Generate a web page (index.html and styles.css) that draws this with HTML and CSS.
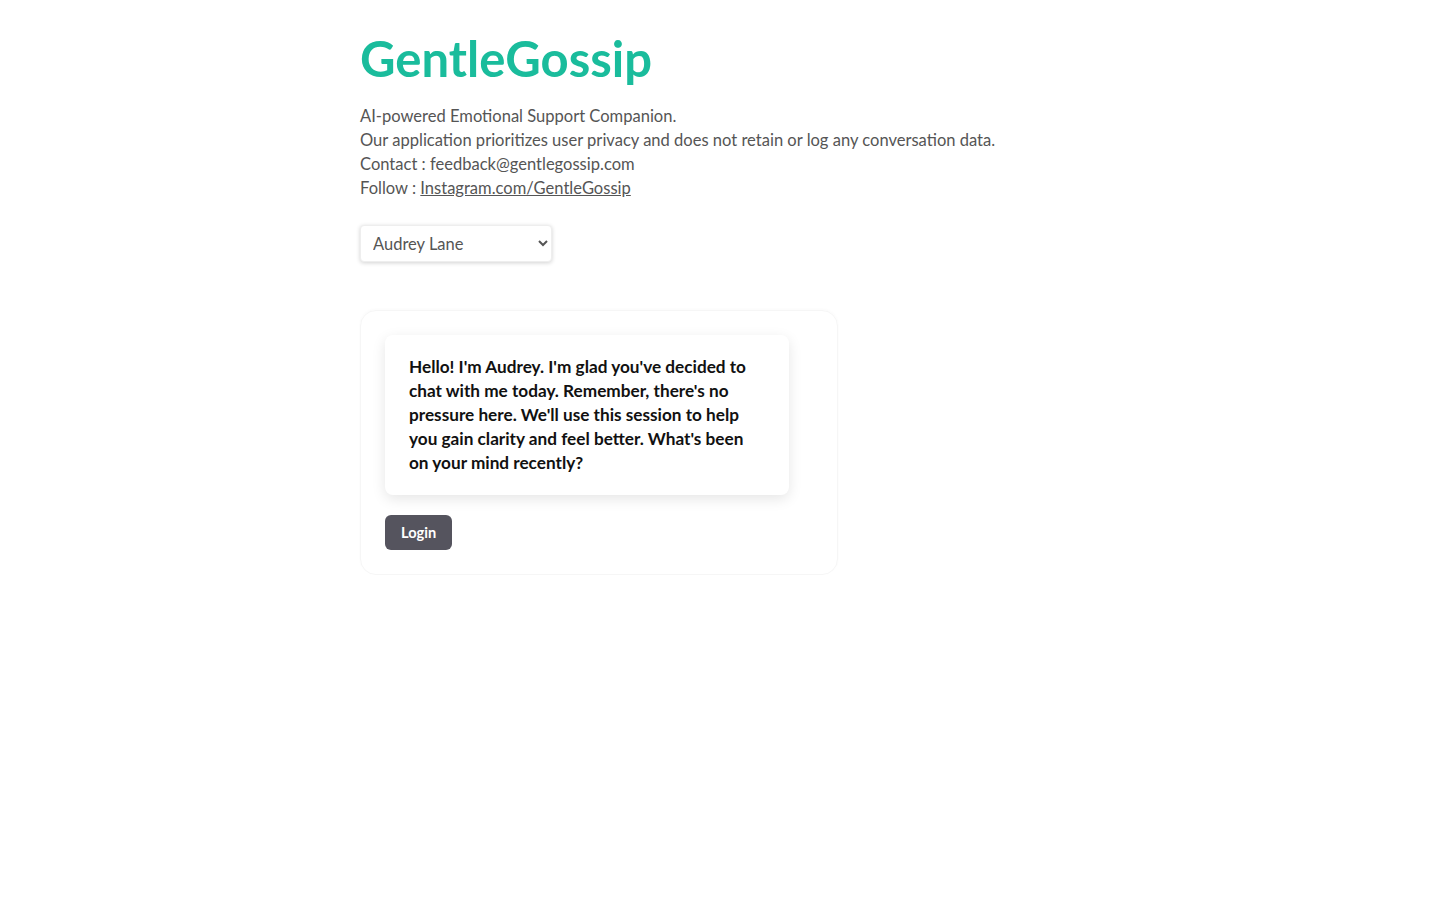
FILE: index.html
```html
<!DOCTYPE html>
<html lang="en">
<head>
<meta charset="utf-8">
<title>GentleGossip</title>
<link rel="stylesheet" href="styles.css">
</head>
<body>
<main class="container">
  <h1 class="brand">GentleGossip</h1>
  <div class="intro">
    <p>AI-powered Emotional Support Companion.</p>
    <p>Our application prioritizes user privacy and does not retain or log any conversation data.</p>
    <p>Contact : feedback@gentlegossip.com</p>
    <p>Follow : <a href="#">Instagram.com/GentleGossip</a></p>
  </div>
  <select class="persona">
    <option>Audrey Lane</option>
  </select>
  <section class="card">
    <div class="bubble">Hello! I'm Audrey. I'm glad you've decided to chat with me today. Remember, there's no pressure here. We'll use this session to help you gain clarity and feel better. What's been on your mind recently?</div>
    <button class="login">Login</button>
  </section>
</main>
</body>
</html>
```

FILE: styles.css
```css
html, body {
  margin: 0;
  padding: 0;
  background: #fff;
}
body {
  font-family: Lato, "Open Sans", sans-serif;
  color: #4a4a4a;
}
.container {
  width: 720px;
  margin: 0 auto;
  padding-top: 28px;
}
.brand {
  margin: 0;
  font-size: 49px;
  line-height: 60px;
  font-weight: 700;
  color: #1abc9c;
}
.intro {
  margin-top: 16px;
  font-size: 16.55px;
  line-height: 24px;
  color: #555;
}
.intro p {
  margin: 0;
}
.intro a {
  color: #555;
  text-decoration: underline;
}
.persona {
  display: block;
  margin-top: 25px;
  width: 192px;
  height: 37px;
  padding: 0 6px 0 8px;
  font-family: inherit;
  font-size: 16.5px;
  color: #555;
  background: #fff;
  border: 1px solid #eee;
  border-radius: 4px;
  box-shadow: 0 1px 4px rgba(0, 0, 0, 0.18);
}
.card {
  margin-top: 48px;
  width: 428px;
  padding: 24px;
  border: 1px solid #f6f6f6;
  border-radius: 16px;
  box-shadow: 0 -1px 3px rgba(0, 0, 0, 0.025);
}
.bubble {
  width: 357px;
  padding: 20px 23px 20px 24px;
  border-radius: 8px;
  background: #fff;
  box-shadow: 0 4px 14px rgba(0, 0, 0, 0.1);
  font-size: 17.2px;
  line-height: 24px;
  font-weight: 700;
  color: #111;
}
.login {
  display: block;
  margin-top: 20px;
  height: 35px;
  padding: 0 16px;
  border: none;
  border-radius: 6px;
  background: #55545e;
  color: #fff;
  font-family: inherit;
  font-size: 14.6px;
  font-weight: 700;
}
```
